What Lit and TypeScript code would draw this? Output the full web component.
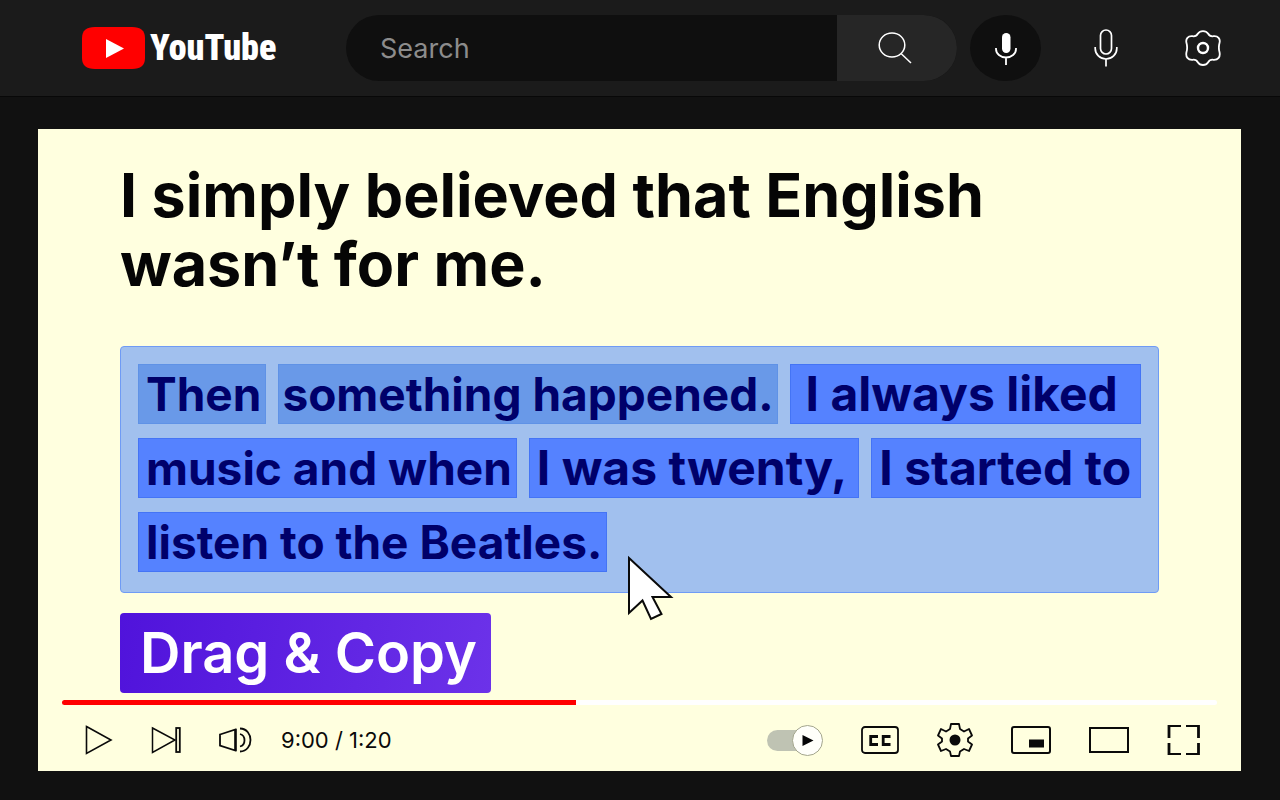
import { LitElement, html, css } from "lit";
import { customElement, state } from "lit/decorators.js";
import { classMap } from "lit/directives/class-map.js";
import { styleMap } from "lit/directives/style-map.js";

interface Phrase {
  text: string;
  tone: "soft" | "strong";
  kind?: string;
}

const ROWS: Phrase[][] = [
  [
    { text: "Then", tone: "soft" },
    { text: "something happened.", tone: "soft", kind: "tight" },
    { text: "I always liked", tone: "strong", kind: "large rest indent" },
  ],
  [
    { text: "music and when", tone: "strong" },
    { text: "I was twenty,", tone: "strong", kind: "large" },
    { text: "I started to", tone: "strong", kind: "large rest" },
  ],
  [{ text: "listen to the Beatles.", tone: "strong" }],
];

@customElement("caption-panel")
export class CaptionPanel extends LitElement {
  static styles = css`
    :host {
      display: block;
      position: relative;
    }
    .panel {
      display: flex;
      flex-direction: column;
      gap: 14px;
      padding: 17px 17px 20px;
      background: #a1c0ee;
      border: 1px solid #6f9bf5;
      border-radius: 4px;
    }
    .row {
      display: flex;
      flex-wrap: wrap;
      gap: 12px;
    }
    .phrase {
      box-sizing: border-box;
      padding: 0 5px 0 8px;
      font-size: 46px;
      line-height: 60px;
      font-weight: 700;
      color: #00006a;
      white-space: nowrap;
    }
    .soft {
      background: #6999e8;
      box-shadow: inset 0 0 0 1px #5f92e6;
    }
    .strong {
      background: #5582ff;
      box-shadow: inset 0 0 0 1px #4474f5;
    }
    .tight {
      padding: 0 4px;
    }
    .large {
      padding: 0 12px 0 8px;
      font-size: 48px;
    }
    .rest {
      flex: 1;
      padding: 0 4px 0 8px;
    }
    .indent {
      padding: 0 4px 0 16px;
    }
    .pointer {
      position: absolute;
      left: 507px;
      bottom: -28px;
      width: 48px;
      height: 66px;
    }
  `;

  render() {
    return html`
      <div class="panel">
        ${ROWS.map(
          (row) => html`<div class="row">
            ${row.map((p) => html`<span class="phrase ${p.tone} ${p.kind ?? ""}">${p.text}</span>`)}
          </div>`
        )}
      </div>
      <svg class="pointer" viewBox="0 0 48 66" aria-hidden="true">
        <path d="M2 3 L44 42 L25.500 42 L34.500 59 L24 64 L15.500 45.500 L2 58 Z" fill="#fff" stroke="#0a0a0a" stroke-width="2" />
      </svg>
    `;
  }
}

@customElement("app-root")
export class AppRoot extends LitElement {
  @state() private position = 44.5;
  @state() private autoplay = true;

  static styles = css`
    :host {
      display: block;
      min-height: 100vh;
      background: #111;
      font-family: Inter, "Liberation Sans", sans-serif;
    }
    button,
    input {
      font: inherit;
      margin: 0;
      padding: 0;
      border: 0;
      background: none;
      color: inherit;
    }
    svg {
      display: block;
      fill: none;
    }
    .bar {
      box-sizing: border-box;
      display: flex;
      align-items: center;
      height: 97px;
      padding: 0 59px 0 82px;
      background: #1b1b1b;
      border-bottom: 1px solid #080808;
      color: #fff;
    }
    .logo {
      display: flex;
      align-items: center;
      gap: 5px;
      width: 264px;
      color: #fff;
      text-decoration: none;
    }
    .word {
      font-family: "Roboto Condensed", "Liberation Sans Narrow", "Liberation Sans", sans-serif;
      font-weight: 900;
      font-size: 36px;
      line-height: 44px;
    }
    .search {
      display: flex;
      flex: 1;
      height: 66px;
      border-radius: 33px;
      background: #0f0f0f;
      overflow: hidden;
    }
    .field {
      flex: 1;
      min-width: 0;
      padding-left: 34px;
      font-size: 27px;
      font-weight: 400;
    }
    .field::placeholder {
      color: #8c8c8c;
      opacity: 1;
    }
    .go {
      display: grid;
      place-items: center;
      width: 120px;
      padding-right: 5px;
      background: #262626;
    }
    .voice {
      display: grid;
      place-items: center;
      width: 71px;
      height: 66px;
      margin-left: 13px;
      border-radius: 50%;
      background: #0f0f0f;
    }
    .mic {
      margin-left: 53px;
    }
    .prefs {
      margin-left: 67px;
    }
    .video {
      display: flex;
      flex-direction: column;
      margin: 32px 39px 0 38px;
      padding-top: 32px;
      background: #ffffdf;
    }
    .slide {
      padding: 0 82px;
    }
    h1 {
      margin: 0 0 47px;
      max-width: 900px;
      font-size: 61px;
      line-height: 69px;
      font-weight: 700;
      color: #050505;
    }
    .copy {
      margin-top: 20px;
      padding: 0 14px 0 20px;
      height: 80px;
      border-radius: 4px;
      background: linear-gradient(100deg, #5013db, #6c32e9);
      color: #fff;
      font-size: 56px;
      line-height: 80px;
      font-weight: 600;
    }
    .seek {
      appearance: none;
      display: block;
      height: 5px;
      margin: 7px 24px 0;
      border-radius: 3px;
      overflow: hidden;
    }
    .seek::-webkit-slider-thumb {
      appearance: none;
      width: 0;
      height: 0;
    }
    .controls {
      box-sizing: border-box;
      display: flex;
      align-items: center;
      justify-content: space-between;
      height: 66px;
      padding: 4px 40px 0 47px;
      color: #0a0a0a;
    }
    .group {
      display: flex;
      align-items: center;
      gap: 38px;
    }
    .time {
      margin-left: -10px;
      font-size: 22px;
      line-height: 30px;
    }
    .switch {
      display: grid;
    }
    .switch > * {
      grid-area: 1 / 1;
    }
    .switch input {
      appearance: none;
    }
    .off {
      opacity: 0.6;
    }
  `;

  render() {
    return html`
      <header class="bar">
        <a class="logo" href="#" aria-label="YouTube home">
          <svg width="63" height="42" viewBox="0 0 63 42">
            <path d="M13 0H50Q63 0 63 11V31Q63 42 50 42H13Q0 42 0 31V11Q0 0 13 0Z" fill="#f00" />
            <path d="M24 12 42 21.500 24 31Z" fill="#fff" />
          </svg>
          <span class="word">YouTube</span>
        </a>
        <form class="search" role="search" @submit=${(e: Event) => e.preventDefault()}>
          <input class="field" type="text" placeholder="Search" aria-label="Search" />
          <button class="go" aria-label="Search">
            <svg width="34" height="32" viewBox="0 0 34 32" stroke="#fff" stroke-width="1.500">
              <ellipse cx="14" cy="13" rx="12.800" ry="12" />
              <path d="M23 21.500 33 31" />
            </svg>
          </button>
        </form>
        <button class="voice" aria-label="Search by voice">
          <svg width="22" height="34" viewBox="0 0 22 34" stroke="#fff" stroke-width="1.800">
            <rect x="7" y="2" width="8.500" height="20" rx="4.200" fill="#fff" stroke="none" />
            <path d="M1 17V18A10 8.500 0 0 0 21 18V17M11 26.500V34" />
          </svg>
        </button>
        <button class="mic" aria-label="Microphone">
          <svg width="24" height="38" viewBox="0 0 24 38" stroke="#fff" stroke-width="1.700">
            <rect x="6.500" y="1" width="11" height="24" rx="5.500" />
            <path d="M1.200 18V19.500A10.800 10.500 0 0 0 22.800 19.500V18M12 30V37.500" />
          </svg>
        </button>
        <button class="prefs" aria-label="Settings">
          <svg width="36" height="36" viewBox="0 0 36 36" stroke="#fff" stroke-width="1.800">
            <path
              stroke-linejoin="round"
              d="M13 3.500C15 .2 21 .2 23 3.500C24.500 6.200 26 6.600 28.500 6.200C33 5.700 35.600 9 34.500 13C33.500 16.500 33.500 18.500 34.500 22C35.600 27 33 30 28.500 29.800C26 29.400 24.500 30 23 32.500C21 35.800 15 35.800 13 32.500C11.500 30 10 29.400 7.500 29.800C3 30 .4 27 1.500 22C2.500 18.500 2.500 16.500 1.500 13C.4 9 3 5.700 7.500 6.200C10 6.600 11.500 6.200 13 3.500Z"
            />
            <circle cx="18" cy="18" r="5" stroke-width="2.400" />
          </svg>
        </button>
      </header>

      <main class="video">
        <section class="slide">
          <h1>I simply believed that English wasn’t for me.</h1>
          <caption-panel></caption-panel>
          <button class="copy">Drag &amp; Copy</button>
        </section>
        <input
          class="seek"
          type="range"
          min="0"
          max="100"
          step="0.5"
          aria-label="Seek"
          .value=${String(this.position)}
          style=${styleMap({
            background: `linear-gradient(to right, #f00 ${this.position}%, #fff ${this.position}%)`,
          })}
          @input=${(e: Event) => (this.position = Number((e.target as HTMLInputElement).value))}
        />
        <div class="controls">
          <div class="group">
            <button aria-label="Play">
              <svg width="28" height="30" viewBox="0 0 28 30" stroke="currentColor" stroke-width="1.600">
                <path d="M1.500 1.500 26 15 1.500 28.500Z" />
              </svg>
            </button>
            <button aria-label="Next">
              <svg width="30" height="28" viewBox="0 0 30 28" stroke="currentColor" stroke-width="1.500">
                <path d="M1.500 2 24 14 1.500 26.500Z" />
                <rect x="25.200" y="2" width="3.600" height="24" stroke-width="1.800" />
              </svg>
            </button>
            <button aria-label="Volume">
              <svg width="34" height="28" viewBox="0 0 34 28" stroke="currentColor" stroke-width="1.800">
                <path d="M1 8.500 16.500 3.500V24.500L1 19.500Z" />
                <path d="M16.500 3V25" stroke-width="2.400" />
                <path d="M21 8C27 9.500 27 19 21 20.500M21 2.500C35 3 35 25 21 25.500" />
              </svg>
            </button>
            <span class="time">9:00 / 1:20</span>
          </div>
          <div class="group">
            <label class="switch ${classMap({ off: !this.autoplay })}">
              <input
                type="checkbox"
                aria-label="Autoplay"
                .checked=${this.autoplay}
                @change=${(e: Event) => (this.autoplay = (e.target as HTMLInputElement).checked)}
              />
              <svg width="56" height="31" viewBox="0 0 56 31">
                <rect y="5" width="46" height="21" rx="10.500" fill="#bfc3b3" />
                <circle cx="40.500" cy="15.500" r="15" fill="#fffffa" stroke="#a3a58c" stroke-width="1" />
                <path d="M35.500 10 46.500 15.500 35.500 21Z" fill="#050505" />
              </svg>
            </label>
            <button aria-label="Subtitles">
              <svg width="38" height="28" viewBox="0 0 38 28" stroke="currentColor">
                <rect x="1" y="1" width="36" height="26" rx="3" stroke-width="1.800" />
                <path d="M17 10.500H9.700V18.500H17M29.500 10.500H22.200V18.500H29.500" stroke-width="2.800" />
              </svg>
            </button>
            <button aria-label="Player settings">
              <svg width="36" height="34" viewBox="0 0 36 34" stroke="currentColor" stroke-width="1.800">
                <path
                  stroke-linejoin="round"
                  d="M14 1H22L23 6L27 8.500L32 6L35 12.500L31 15.500V18.500L35 21.500L32 28L27 26L23 28.500L22 33H14L13 28.500L9 26L4 28L1 21.500L5 18.500V15.500L1 12.500L4 6L9 8.500L13 6Z"
                />
                <circle cx="18" cy="17" r="5.500" fill="currentColor" stroke="none" />
              </svg>
            </button>
            <button aria-label="Miniplayer">
              <svg width="40" height="28" viewBox="0 0 40 28" stroke="currentColor" stroke-width="2">
                <rect x="1" y="1" width="38" height="26" rx="2" />
                <rect x="18" y="13.500" width="15" height="8" fill="currentColor" stroke="none" />
              </svg>
            </button>
            <button aria-label="Theater mode">
              <svg width="40" height="26" viewBox="0 0 40 26" stroke="currentColor" stroke-width="2">
                <rect x="1" y="1" width="38" height="24" />
              </svg>
            </button>
            <button aria-label="Full screen">
              <svg width="34" height="30" viewBox="0 0 34 30" stroke="currentColor">
                <path d="M2 0V13M31.500 0V13M2 30V18M31.500 30V18" stroke-width="2.800" />
                <path d="M2 1H14M19 1H31M2 29H14M19 29H31" stroke-width="2" />
              </svg>
            </button>
          </div>
        </div>
      </main>
    `;
  }
}
